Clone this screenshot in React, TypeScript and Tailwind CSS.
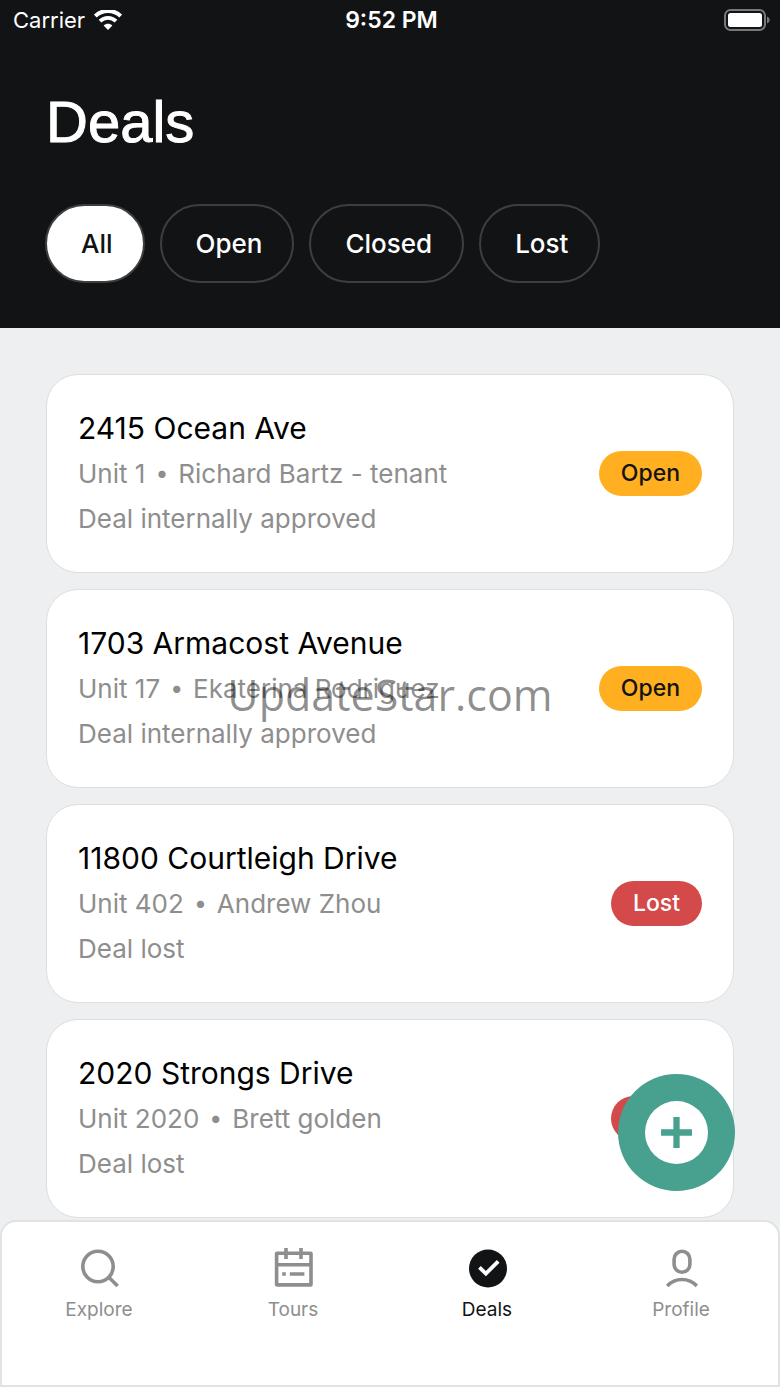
import { useState } from "react";
import clsx from "clsx";

type Status = "Open" | "Lost";

interface Deal {
  address: string;
  unit: string;
  client: string;
  note: string;
  status: Status;
}

const deals: Deal[] = [
  { address: "2415 Ocean Ave", unit: "Unit 1", client: "Richard Bartz - tenant", note: "Deal internally approved", status: "Open" },
  { address: "1703 Armacost Avenue", unit: "Unit 17", client: "Ekaterina Rodriguez", note: "Deal internally approved", status: "Open" },
  { address: "11800 Courtleigh Drive", unit: "Unit 402", client: "Andrew Zhou", note: "Deal lost", status: "Lost" },
  { address: "2020 Strongs Drive", unit: "Unit 2020", client: "Brett golden", note: "Deal lost", status: "Lost" },
];

const filters = ["All", "Open", "Closed", "Lost"];

const WifiIcon = () => (
  <svg width="28" height="20" viewBox="0 0 28 20" fill="none" stroke="currentColor" aria-hidden="true">
    <path d="M1.3 6C8.3-.8 19.7-.8 26.7 6" strokeWidth="4" />
    <path d="M6 11.2C10.6 6.8 17.4 6.8 22 11.2" strokeWidth="3.8" />
    <path d="M14 20L9.6 15.6C12.2 13 15.8 13 18.4 15.6Z" fill="currentColor" stroke="none" />
  </svg>
);

const BatteryIcon = () => (
  <svg width="46" height="22" viewBox="0 0 46 22" aria-hidden="true">
    <rect x="1" y="1" width="40" height="20" rx="5.5" fill="none" stroke="#77787a" strokeWidth="2" />
    <rect x="4" y="4" width="34" height="14" rx="2.5" fill="#fff" />
    <path d="M43 7.5C46.6 9 46.6 13 43 14.5Z" fill="#77787a" />
  </svg>
);

const SearchIcon = () => (
  <svg width="40" height="40" viewBox="0 0 40 40" fill="none" stroke="currentColor" strokeWidth="3.6" aria-hidden="true">
    <circle cx="19" cy="18.5" r="15.2" />
    <path d="M29.8 29.3L38.6 38.1" />
  </svg>
);

const CalendarIcon = () => (
  <svg width="40" height="40" viewBox="0 0 40 40" fill="none" stroke="currentColor" strokeWidth="3.6" aria-hidden="true">
    <rect x="3.6" y="5.3" width="34.4" height="31.6" rx=".5" />
    <path d="M3.6 16.7H38M13 0V11M28 0V11M9.2 26H12.8M16.8 26H31.4" />
  </svg>
);

const DealsIcon = () => (
  <svg width="40" height="40" viewBox="0 0 40 40" fill="none" aria-hidden="true">
    <circle cx="21" cy="20.5" r="19" fill="#111315" />
    <path d="M12.4 19.4L18.9 25.6L31.2 13.4" stroke="#fff" strokeWidth="3.8" />
  </svg>
);

const ProfileIcon = () => (
  <svg width="40" height="40" viewBox="0 0 40 40" fill="none" stroke="currentColor" strokeWidth="3.6" aria-hidden="true">
    <rect x="13.1" y="3.3" width="15.8" height="21" rx="7.9" />
    <path d="M6.2 38C14.4 29.4 27.6 29.4 35.8 38" />
  </svg>
);

const tabs = [
  { label: "Explore", Icon: SearchIcon },
  { label: "Tours", Icon: CalendarIcon },
  { label: "Deals", Icon: DealsIcon },
  { label: "Profile", Icon: ProfileIcon },
];

const StatusBar = () => (
  <div className="grid h-10 grid-cols-3 items-center pr-[10px] pl-[13px] text-[22px]">
    <div className="flex items-center gap-[9px]">
      <span>Carrier</span>
      <WifiIcon />
    </div>
    <span className="text-center text-[23px] font-semibold">9:52 PM</span>
    <div className="flex justify-end">
      <BatteryIcon />
    </div>
  </div>
);

const DealCard = ({ deal }: { deal: Deal }) => (
  <li className="flex items-center justify-between rounded-[32px] border border-[#dcdee0] bg-white p-[31px]">
    <div className="text-[26px] leading-[45px] text-[#8e8e8e]">
      <h2 className="text-[30px] leading-[45px] text-black">{deal.address}</h2>
      <p className="flex gap-[10px]">
        <span>{deal.unit}</span>
        <span className="text-[23px]">•</span>
        <span>{deal.client}</span>
      </p>
      <p>{deal.note}</p>
    </div>
    <span
      className={clsx(
        "rounded-full px-[22px] text-[23px] leading-[45px] font-medium",
        deal.status === "Open" ? "bg-[#ffaf20] text-[#111315]" : "bg-[#d44a4a] text-white"
      )}
    >
      {deal.status}
    </span>
  </li>
);

const App = () => {
  const [filter, setFilter] = useState("All");
  const visible = deals.filter((deal) => filter === "All" || deal.status === filter);

  return (
    <div className="relative flex min-h-screen flex-col bg-[#edeff1] font-['Inter',sans-serif]">
      <header className="bg-[#111315] pb-[45px] text-white">
        <StatusBar />
        <h1 className="mt-[46px] px-[46px] font-['Liberation_Sans',sans-serif] text-[58px] leading-[72px] [-webkit-text-stroke:1px_white]">
          Deals
        </h1>
        <div className="mt-[46px] flex gap-[15px] px-[45px]">
          {filters.map((name) => (
            <button
              key={name}
              type="button"
              aria-pressed={filter === name}
              onClick={() => setFilter(name)}
              className={clsx(
                "h-[79px] rounded-full border-2 border-[#3d3e40] pr-[30px] pl-[34px] text-[26px] font-medium",
                filter === name ? "bg-white text-[#111315]" : "text-white"
              )}
            >
              {name}
            </button>
          ))}
        </div>
      </header>

      <main className="relative flex-1 px-[46px] pt-[46px] pb-[2px]">
        <ul className="flex flex-col gap-4">
          {visible.map((deal) => (
            <DealCard key={deal.address} deal={deal} />
          ))}
        </ul>
        <button
          type="button"
          aria-label="Add deal"
          className="absolute right-[45px] bottom-[29px] flex size-[117px] items-center justify-center rounded-full bg-[#48a08f]"
        >
          <svg width="63" height="63" viewBox="0 0 64 64" aria-hidden="true">
            <circle cx="32" cy="32" r="32" fill="#fff" />
            <path d="M32 16.3V47.7M16.3 32H47.7" stroke="#48a08f" strokeWidth="6.4" />
          </svg>
        </button>
      </main>

      <nav className="grid h-[167px] grid-cols-4 items-start rounded-t-2xl border-2 border-[#e0e2e3] bg-white pt-[26px]">
        {tabs.map(({ label, Icon }) => (
          <a
            key={label}
            href={`#${label.toLowerCase()}`}
            aria-current={label === "Deals" ? "page" : undefined}
            className={clsx(
              "flex flex-col items-center gap-2 text-[19px] leading-7",
              label === "Deals" ? "text-[#111315]" : "text-[#8e8e8e]"
            )}
          >
            <Icon />
            {label}
          </a>
        ))}
      </nav>

      <div className="pointer-events-none absolute inset-0 flex items-center justify-center pt-1 font-['Open_Sans',sans-serif] text-[43px] text-black/45">
        UpdateStar.com
      </div>
    </div>
  );
};

export default App;
